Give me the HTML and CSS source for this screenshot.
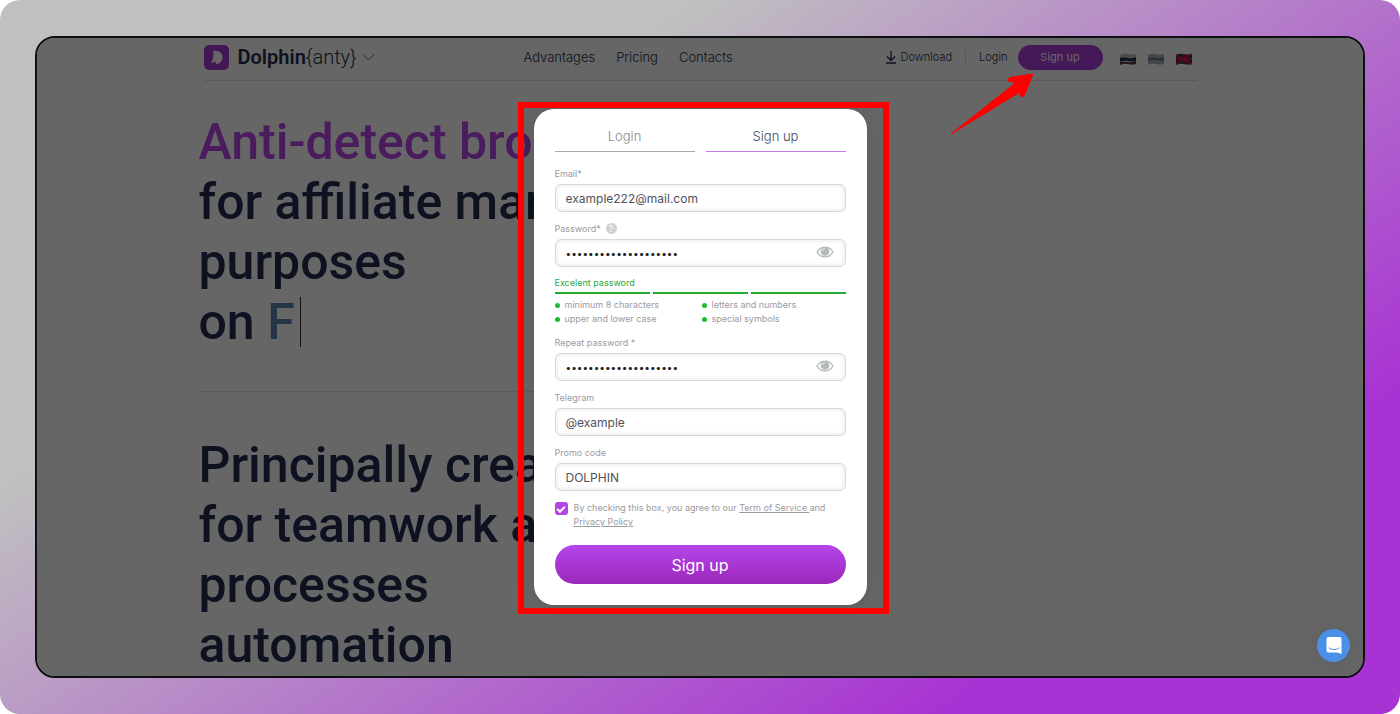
FILE: index.html
```html
<!DOCTYPE html>
<html lang="en">
<head>
  <meta charset="UTF-8" />
  <meta name="viewport" content="width=device-width, initial-scale=1" />
  <title>Dolphin{anty}</title>
  <link rel="stylesheet" href="styles.css">
</head>
<body>

  <div class="backdrop">
    <div class="window">

      <header class="header">
        <a class="logo" href="#">
          <svg class="logo-mark" viewBox="0 0 25 25">
            <rect width="25" height="25" rx="5" fill="#a63bd2"/>
            <path d="M9 5.500c.3 2 .6 4 .2 6 0 2-.8 4-2.200 7q3-.6 4-2.500l1 3c4 0 6.500-3 6.500-6.800S16 6 12 6z" fill="#fff"/>
          </svg>
          <span class="logo-text"><b>Dolphin</b>{anty}</span>
          <svg class="logo-arrow" viewBox="0 0 13 8"><path d="M.5 1l6 6 6-6" fill="none" stroke="#666f85"/></svg>
        </a>
        <nav class="nav">
          <a href="#">Advantages</a>
          <a href="#">Pricing</a>
          <a href="#">Contacts</a>
        </nav>
        <div class="account">
          <a class="download" href="#">
            <svg viewBox="0 0 10 13"><path d="M5 0v9M1 5.500l4 4 4-4M0 12h10" fill="none" stroke="#232f50" stroke-width="1.300"/></svg>
            Download
          </a>
          <a class="login" href="#">Login</a>
          <button class="signup-small" type="button">Sign up</button>
          <div class="flags">
            <svg viewBox="0 0 16 12"><path d="M0 2q4-2 8-1t8 0v4H0z" fill="#bbb"/><path d="M0 5q4-1 8 0t8-1v4q-4 1-8 0t-8 1z" fill="#202c55"/><path d="M0 9q4-1 8 0t8-1v3q-4 1-8 0t-8 1z" fill="#5c2c38"/></svg>
            <svg viewBox="0 0 16 12"><path d="M0 2q4-2 8-1t8 0v10q-4 1-8 0t-8 1z" fill="#aaaeb6"/><path d="M0 5q4-1 8 0t8-1v3q-4 1-8 0t-8 1z" fill="#5b779e"/></svg>
            <svg viewBox="0 0 16 12"><path d="M0 2q4-2 8-1t8 0v10q-4 1-8 0t-8 1z" fill="#28335e"/><path d="M0 2l16 9M16 1L0 11M8 1v10M0 6h16" stroke="#e01838" stroke-width="1.600"/></svg>
          </div>
        </div>
      </header>

      <main class="content">
        <h1 class="title"><span class="accent">Anti-detect browser</span><br>for affiliate marketing<br>purposes<br>on <span class="typed">F</span></h1>
        <h2 class="title">Principally created<br>for teamwork and<br>processes<br>automation</h2>
      </main>

      <div class="overlay">
        <div class="modal">
          <form class="form">
            <div class="tabs">
              <button class="tab" type="button">Login</button>
              <button class="tab active" type="button">Sign up</button>
            </div>

            <div class="field">
              <label for="email">Email*</label>
              <input type="text" id="email" value="example222@mail.com">
            </div>

            <div class="field">
              <label for="password">Password* <span class="help">?</span></label>
              <div class="password">
                <input type="password" id="password" value="Dolphin#Anty2022!xyz">
                <svg class="eye" viewBox="0 0 18 12"><path d="M1 6c4-6.500 12-6.500 16 0-4 6.500-12 6.500-16 0z" fill="none" stroke="#b4b9ba" stroke-width="1.400"/><circle cx="9" cy="5.500" r="4.300" fill="#b4b9ba"/><path d="M6.500 5A2.500 2.500 0 0 1 9 2.700" fill="none" stroke="#fff" stroke-width=".8"/></svg>
              </div>
              <div class="strength">
                <p>Excelent password</p>
                <div class="bars"><i></i><i></i><i></i></div>
                <ul>
                  <li>minimum 8 characters</li>
                  <li>letters and numbers</li>
                  <li>upper and lower case</li>
                  <li>special symbols</li>
                </ul>
              </div>
            </div>

            <div class="field">
              <label for="repeat">Repeat password *</label>
              <div class="password">
                <input type="password" id="repeat" value="Dolphin#Anty2022!xyz">
                <svg class="eye" viewBox="0 0 18 12"><path d="M1 6c4-6.500 12-6.500 16 0-4 6.500-12 6.500-16 0z" fill="none" stroke="#b4b9ba" stroke-width="1.400"/><circle cx="9" cy="5.500" r="4.300" fill="#b4b9ba"/><path d="M6.500 5A2.500 2.500 0 0 1 9 2.700" fill="none" stroke="#fff" stroke-width=".8"/></svg>
              </div>
            </div>

            <div class="field">
              <label for="telegram">Telegram</label>
              <input type="text" id="telegram" value="@example">
            </div>

            <div class="field">
              <label for="promo">Promo code</label>
              <input type="text" id="promo" value="DOLPHIN">
            </div>

            <div class="agree">
              <input type="checkbox" id="agree" checked>
              <label for="agree">By checking this box, you agree to our <a href="#">Term of Service </a>and <a href="#">Privacy Policy</a></label>
            </div>

            <button class="submit" type="submit">Sign up</button>
          </form>
          <div class="highlight"></div>
        </div>
      </div>

      <svg class="pointer" viewBox="0 0 84 62"><path d="M83 1L60 4.500Q57 6 59 8.500L66 9.500 1 61 71 18.500 70 22Q71 25 74 23z" fill="#f00" stroke="#f00" stroke-linejoin="round"/></svg>

      <button class="chat" type="button" aria-label="Open chat">
        <svg viewBox="0 0 16 17"><path d="M2.500 0h11Q15.500 0 15.500 2v15l-4-1.500h-9Q.5 15.500.5 13.500V2Q.5 0 2.500 0z" fill="#fff"/><path d="M3 11q5 3.500 10 0" fill="none" stroke="#4a90e8" stroke-linecap="round"/></svg>
      </button>
    </div>
  </div>

</body>
</html>
```
FILE: styles.css
```css
* {
  box-sizing: border-box;
}
body {
  margin: 0;
  background: #fff;
  font-family: Inter, "Liberation Sans", sans-serif;
  color: #232f50;
}
h1, h2, p, ul {
  margin: 0;
  padding: 0;
}
a {
  color: inherit;
  text-decoration: none;
}
button {
  border: none;
  background: none;
  padding: 0;
  font-family: inherit;
  cursor: pointer;
}
.backdrop {
  display: flex;
  height: 100vh;
  min-height: 600px;
  padding: 36px 35px;
  border-radius: 20px;
  background: linear-gradient(145deg, #c0c0c0 29%, #a832d3 81%);
}
.window {
  position: relative;
  flex: 1;
  overflow: hidden;
  border: 2px solid #0d0f12;
  border-radius: 20px;
  background: #fff;
}

/* header */
.header {
  display: grid;
  grid-template-columns: 320px 1fr auto;
  align-items: center;
  max-width: 993px;
  height: 43px;
  margin: 0 auto;
  padding-bottom: 4px;
  border-bottom: 1px solid #e0e0e0;
}
.logo {
  display: flex;
  align-items: center;
}
.logo-mark {
  width: 25px;
  height: 25px;
  margin-right: 9px;
}
.logo-text {
  font-family: Roboto, sans-serif;
  font-size: 20px;
  font-weight: 300;
}
.logo-text b {
  font-weight: 600;
}
.logo-arrow {
  width: 13px;
  height: 8px;
  margin-left: 5px;
}
.nav {
  display: flex;
  gap: 21px;
  font-size: 13px;
  font-weight: 300;
}
.account {
  display: flex;
  align-items: center;
  font-size: 11px;
  font-weight: 300;
}
.download {
  display: flex;
  align-items: center;
  gap: 5px;
  padding-right: 13px;
  border-right: 1px solid #d8d8d8;
}
.download svg {
  width: 10px;
  height: 13px;
}
.login {
  padding: 0 10px 0 13px;
}
.signup-small {
  width: 85px;
  height: 25px;
  border-radius: 13px;
  background: #ad3fdc;
  color: #fff;
  font-size: 11px;
}
.flags {
  display: flex;
  gap: 12px;
  padding: 3px 5px 0 17px;
}
.flags svg {
  width: 16px;
  height: 12px;
}

/* page text */
.content {
  max-width: 1003px;
  margin: 0 auto;
}
.title {
  max-width: 600px;
  padding: 31px 0 39px;
  font-family: Roboto, sans-serif;
  font-size: 50px;
  font-weight: 500;
  line-height: 60px;
}
h1.title {
  border-bottom: 1px solid #e0e0e0;
}
h2.title {
  padding-top: 43px;
}
.accent {
  color: #b946e9;
}
.typed {
  display: inline-block;
  padding-right: 5px;
  border-right: 1px solid #333;
  color: #6082b4;
  line-height: 50px;
}

/* sign up dialog */
.overlay {
  position: absolute;
  inset: 0;
  display: flex;
  align-items: center;
  justify-content: center;
  background: rgba(0, 0, 0, 0.6);
}
.modal {
  position: relative;
  width: 333px;
  padding: 12px 21px 21px;
  border-radius: 20px;
  background: #fff;
  box-shadow: 0 0 20px rgba(0, 0, 0, 0.1);
}
.highlight {
  position: absolute;
  inset: -7px -22px -9px -16px;
  border: 6px solid #f00;
  pointer-events: none;
}
.form {
  display: flex;
  flex-direction: column;
  gap: 10px;
}
.tabs {
  display: flex;
  gap: 11px;
  margin-bottom: 5px;
}
.tab {
  flex: 1;
  height: 31px;
  border-bottom: 1px solid #a9a9ab;
  color: #888;
  font-size: 13px;
  font-weight: 300;
}
.tab.active {
  border-color: #c67bea;
  color: #3c4660;
}
.field label {
  display: flex;
  align-items: center;
  gap: 5px;
  height: 13px;
  margin-bottom: 4px;
  color: #999b9f;
  font-size: 9px;
}
.field input {
  display: block;
  width: 100%;
  height: 28px;
  padding: 0 10px;
  border: 1px solid #d9d9d9;
  border-radius: 6px;
  box-shadow: inset 0 0 5px rgba(0, 0, 0, 0.12);
  background: #fff;
  color: #505158;
  font-family: inherit;
  font-size: 12px;
}
.help {
  width: 11px;
  height: 11px;
  border-radius: 50%;
  background: #cfd1d3;
  color: #fff;
  font-size: 9px;
  line-height: 11px;
  text-align: center;
}
.password {
  position: relative;
}
.password input {
  color: #222;
  font-size: 10px;
}
.eye {
  position: absolute;
  top: 7px;
  right: 12px;
  width: 18px;
  height: 12px;
}
.strength {
  margin-top: 9px;
  color: #999b9f;
  font-size: 9px;
}
.strength p {
  color: #27a836;
  line-height: 13px;
}
.bars {
  display: flex;
  gap: 3px;
  margin: 3px 0 4px;
}
.bars i {
  flex: 1;
  height: 2px;
  background: #23ad35;
}
.strength ul {
  display: grid;
  grid-template-columns: 1fr 1fr;
  column-gap: 3px;
  list-style: none;
}
.strength li {
  display: flex;
  align-items: center;
  gap: 5px;
  line-height: 14px;
}
.strength li::before {
  content: "";
  width: 5px;
  height: 5px;
  border-radius: 50%;
  background: #1fb933;
}
.agree {
  display: flex;
  gap: 6px;
  color: #999b9f;
  font-size: 9px;
  line-height: 14px;
}
.agree a {
  text-decoration: underline;
}
.agree input {
  flex: none;
  appearance: none;
  display: grid;
  place-items: center;
  width: 13px;
  height: 13px;
  margin: 1px 0 0;
  border-radius: 3px;
  background: #b443e6;
}
.agree input:checked::before {
  content: "";
  width: 6px;
  height: 3px;
  border: solid #fff;
  border-width: 0 0 2px 2px;
  transform: rotate(-45deg);
}
.submit {
  height: 39px;
  margin-top: 6px;
  border-radius: 20px;
  background: linear-gradient(#b545eb, #9b28b9);
  color: #fff;
  font-size: 16px;
}

.pointer {
  position: absolute;
  top: 35px;
  left: calc(50% + 250px);
  width: 84px;
  height: 62px;
}
.chat {
  position: absolute;
  right: 13px;
  bottom: 14px;
  display: grid;
  place-items: center;
  width: 33px;
  height: 33px;
  border-radius: 50%;
  background: #4a90e8;
  box-shadow: 0 1px 20px rgba(0, 0, 0, 0.1);
}
.chat svg {
  width: 16px;
  height: 17px;
}
```
